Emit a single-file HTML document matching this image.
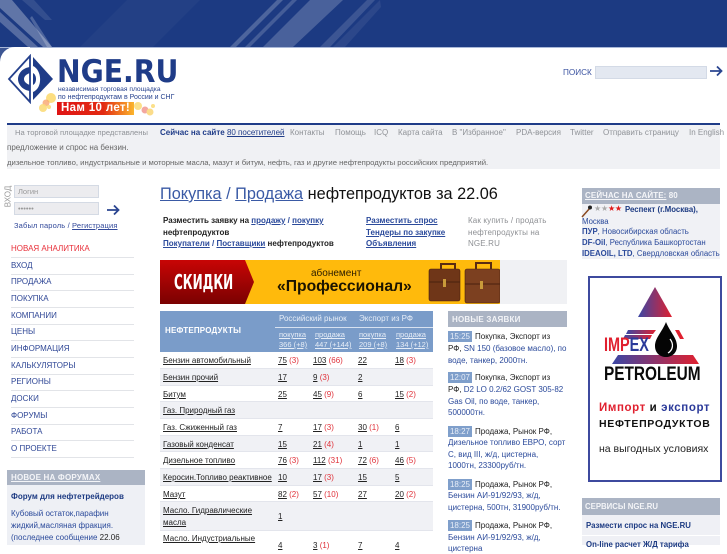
<!DOCTYPE html>
<html lang="ru"><head><meta charset="utf-8"><title>NGE.RU</title>
<style>
html,body{margin:0;padding:0;background:#fff}
body{width:727px;height:545px;overflow:hidden;position:relative;font-family:"Liberation Sans","DejaVu Sans",sans-serif;font-size:8px;color:#222}
.t{position:absolute;white-space:nowrap;line-height:11px;letter-spacing:0}
.b{position:absolute}
a{color:inherit}
.m{position:absolute;left:11px;width:123px;height:16px;border-bottom:1px solid #e2e4e8;color:#2f4796;font-size:8px;line-height:16px}
.n{color:#8f9297;top:127px}
.bk{color:#222}
.r{color:#e0323a}
.bl{color:#2b4a9b}
.db{color:#1c3a82;font-weight:bold}
.row{position:absolute;left:160px;width:273px;border-bottom:1px solid #e3e5ec}
.alt{background:#f0f1f5}
.tm{display:inline-block;width:24px;text-align:center;background:#7f9fcb;color:#e8eef8;margin-right:3px;line-height:11px}
.h{color:#e6edf7;font-size:7.500px}
</style></head><body>

<svg class="b" style="left:0;top:0" width="727" height="48" viewBox="0 0 727 48">
<rect width="727" height="48" fill="#1c3a82"/>
<polygon points="80,47 127,0 200,0 153,47" fill="#fff" opacity=".03"/>
<polygon points="230,47 277,0 283,0 236,47" fill="#fff" opacity=".22"/>
<polygon points="245,47 292,0 297,0 250,47" fill="#fff" opacity=".18"/>
<polygon points="263,47 310,0 343,0 293,47" fill="#fff" opacity=".2"/>
<polygon points="320,47 367,0 375,0 330,47" fill="#fff" opacity=".14"/>
<polygon points="333,47 380,0 381,7 345,47" fill="#fff" opacity=".07"/>
<polygon points="0,0 12,0 52,47 43,47 0,8" fill="#fff" opacity=".3"/>
<polygon points="0,12 38,47 28,47 0,22" fill="#fff" opacity=".25"/>
<polygon points="22,0 34,0 52,20 45,20" fill="#fff" opacity=".1"/>
<polygon points="32,16 52,47 47,47 30,18" fill="#fff" opacity=".22"/>
</svg>
<div class="b" style="left:0;top:47px;width:727px;height:1px;background:#a9b8d8"></div>
<div class="b" style="left:0;top:48px;width:14px;height:14px;background:#3d5693"></div>
<div class="b" style="left:0;top:47px;width:30px;height:30px;background:#fff;border-radius:15px 0 0 0"></div>

<!-- logo -->
<svg class="b" style="left:7px;top:54px" width="48" height="50" viewBox="0 0 48 50">
<path d="M23,2 L2,25 L23,48 Z" fill="#fff" stroke="#24408c" stroke-width="1.800"/>
<path d="M23,13 C15,14 11,20 11,25 C11,30 15,36 23,37 L23,31 C20,30 17,28 17,25 C17,22 20,20 23,19 Z" fill="#1f3c88"/>
<polygon points="26,3 46,25 26,46" fill="#1f3c88"/>
<path d="M26,12 C35,16 36,34 26,38 L26,31 C30,29 30,21 26,19 Z" fill="#fff"/>
</svg>
<div class="t" style="left:57px;top:56px;font-size:31px;line-height:32px;font-weight:bold;color:#1f3c88;font-family:'DejaVu Sans',sans-serif;transform-origin:0 0;transform:scaleX(.91)">NGE.RU</div>
<div class="t" style="left:58px;top:85px;font-size:6.700px;line-height:9px;color:#28438f">независимая торговая площадка</div>
<div class="t" style="left:58px;top:93px;font-size:7px;line-height:9px;color:#28438f">по нефтепродуктам в России и СНГ</div>
<svg class="b" style="left:38px;top:86px" width="120" height="32" viewBox="0 0 120 32">
<circle cx="13" cy="12" r="5" fill="#fbd86b" opacity=".85"/><circle cx="8" cy="17" r="3.500" fill="#f9a56e" opacity=".8"/><circle cx="5" cy="22" r="4" fill="#fbdc7a" opacity=".9"/><circle cx="11" cy="21" r="2" fill="#fbe08a"/>
<circle cx="100" cy="20" r="4" fill="#fbe08a"/><circle cx="107" cy="24" r="3.500" fill="#f3a7a0"/><circle cx="112" cy="26" r="3.500" fill="#fbdc8a"/><circle cx="115" cy="20" r="2" fill="#fbe08a"/>
</svg>
<div class="b" style="left:57px;top:102px;width:77px;height:13px;background:linear-gradient(90deg,#df1414 0,#e22a12 60%,#fbb52c 100%)"></div>
<div class="t" style="left:61px;top:102px;font-size:11.500px;line-height:13px;font-weight:bold;color:#fff;letter-spacing:.35px">Нам 10 лет!</div>

<!-- search -->
<div class="t" style="left:563px;top:67px;color:#3a52a0;font-size:8.200px">ПОИСК</div>
<div class="b" style="left:595px;top:66px;width:110px;height:11px;background:#e3e8f1;border:1px solid #d3dae6"></div>
<svg class="b" style="left:709px;top:65px" width="14" height="12" viewBox="0 0 14 12"><path d="M1 6H12M8 1.500L12.500 6L8 10.500" fill="none" stroke="#2a4590" stroke-width="1.800"/></svg>

<!-- nav -->
<div class="b" style="left:7px;top:123px;width:713px;height:2px;background:#1f3c88"></div>
<div class="b" style="left:7px;top:125px;width:713px;height:44px;background:#f0f1f4"></div>
<div class="t n" style="left:15px;font-size:7.600px">На торговой площадке представлены</div>
<div class="t" style="left:160px;top:127px;color:#1f3c88"><b>Сейчас на сайте</b> <u>80 посетителей</u></div>
<div class="t n" style="left:290px">Контакты</div>
<div class="t n" style="left:335px">Помощь</div>
<div class="t n" style="left:374px">ICQ</div>
<div class="t n" style="left:398px">Карта сайта</div>
<div class="t n" style="left:452px">В "Избранное"</div>
<div class="t n" style="left:516px">PDA-версия</div>
<div class="t n" style="left:570px">Twitter</div>
<div class="t n" style="left:603px">Отправить страницу</div>
<div class="t n" style="left:689px">In English</div>
<div class="t" style="left:7px;top:142px;color:#666">предложение и спрос на бензин.</div>
<div class="t" style="left:7px;top:157px;color:#666;font-size:7.730px">дизельное топливо, индустриальные и моторные масла, мазут и битум, нефть, газ и другие нефтепродукты российских предприятий.</div>

<!-- login -->
<div class="t" style="left:-3px;top:191px;color:#999;font-size:8px;transform:rotate(-90deg)">ВХОД</div>
<div class="b" style="left:14px;top:185px;width:83px;height:11px;background:#ececef;border:1px solid #d4dae4"></div>
<div class="t" style="left:18px;top:186px;color:#999;font-size:7.500px">Логин</div>
<div class="b" style="left:14px;top:202px;width:83px;height:11px;background:#ececef;border:1px solid #d4dae4"></div>
<div class="t" style="left:18px;top:203px;color:#999;font-size:7.500px">••••••</div>
<svg class="b" style="left:106px;top:204px" width="14" height="12" viewBox="0 0 14 12"><path d="M1 6H12M8 1.500L12.500 6L8 10.500" fill="none" stroke="#2a4590" stroke-width="1.800"/></svg>
<div class="t" style="left:14px;top:220px;color:#32499a;font-size:7.500px;letter-spacing:.15px">Забыл пароль / <u>Регистрация</u></div>

<!-- menu -->
<div class="m" style="top:241px;color:#e8303a">НОВАЯ АНАЛИТИКА</div>
<div class="m" style="top:258px">ВХОД</div>
<div class="m" style="top:274px">ПРОДАЖА</div>
<div class="m" style="top:291px">ПОКУПКА</div>
<div class="m" style="top:308px">КОМПАНИИ</div>
<div class="m" style="top:324px">ЦЕНЫ</div>
<div class="m" style="top:341px">ИНФОРМАЦИЯ</div>
<div class="m" style="top:358px">КАЛЬКУЛЯТОРЫ</div>
<div class="m" style="top:374px">РЕГИОНЫ</div>
<div class="m" style="top:391px">ДОСКИ</div>
<div class="m" style="top:408px">ФОРУМЫ</div>
<div class="m" style="top:424px">РАБОТА</div>
<div class="m" style="top:441px">О ПРОЕКТЕ</div>

<!-- forum -->
<div class="b" style="left:7px;top:470px;width:138px;height:15px;background:#abb4c4"></div>
<div class="b" style="left:7px;top:485px;width:138px;height:60px;background:#eef0f5"></div>
<div class="t" style="left:11px;top:472px;color:#f4f5f8;font-weight:bold;letter-spacing:.2px"><u>НОВОЕ НА ФОРУМАХ</u></div>
<div class="t db" style="left:11px;top:491px">Форум для нефтетрейдеров</div>
<div class="t bl" style="left:11px;top:508px">Кубовый остаток,парафин</div>
<div class="t bl" style="left:11px;top:520px">жидкий,масляная фракция.</div>
<div class="t bl" style="left:11px;top:532px">(последнее сообщение <span class="bk">22.06</span></div>

<!-- title -->
<div class="t" style="left:160px;top:184px;font-size:16.300px;line-height:21px;color:#111"><u style="color:#3a5aa5">Покупка</u> <span style="color:#3a5aa5">/</span> <u style="color:#3a5aa5">Продажа</u> нефтепродуктов за 22.06</div>

<div class="t" style="left:163px;top:215px;font-weight:bold;color:#222">Разместить заявку на <u class="bl">продажу</u> <span class="bl">/</span> <u class="bl">покупку</u></div>
<div class="t" style="left:163px;top:227px;font-weight:bold;color:#222">нефтепродуктов</div>
<div class="t" style="left:163px;top:238px;font-weight:bold;color:#222"><u class="bl">Покупатели</u> <span class="bl">/</span> <u class="bl">Поставщики</u> нефтепродуктов</div>
<div class="t bl" style="left:366px;top:215px;font-weight:bold"><u>Разместить спрос</u></div>
<div class="t bl" style="left:366px;top:227px;font-weight:bold"><u>Тендеры по закупке</u></div>
<div class="t bl" style="left:366px;top:238px;font-weight:bold"><u>Объявления</u></div>
<div class="t" style="left:468px;top:215px;color:#8e9094;letter-spacing:.15px">Как купить / продать</div>
<div class="t" style="left:468px;top:227px;color:#8e9094;letter-spacing:.15px">нефтепродукты на</div>
<div class="t" style="left:468px;top:238px;color:#8e9094;letter-spacing:.15px">NGE.RU</div>

<!-- banner -->
<div class="b" style="left:160px;top:260px;width:407px;height:44px;background:#f0f1f4"></div>
<div class="b" style="left:160px;top:260px;width:340px;height:44px;background:#ffba0c"></div>
<svg class="b" style="left:160px;top:260px" width="340" height="44" viewBox="0 0 340 44">
<defs><linearGradient id="rg" x1="0" y1="0" x2="0" y2="1"><stop offset="0" stop-color="#c80505"/><stop offset="1" stop-color="#7a0202"/></linearGradient></defs>
<polygon points="0,0 85,0 94,22 85,44 0,44" fill="url(#rg)"/>
<g fill="#6f3618" stroke="#4a210e" stroke-width=".6">
<rect x="269" y="9" width="31" height="32" rx="2"/><rect x="305" y="9" width="35" height="34" rx="2" fill="#7c4020"/>
</g>
<path d="M281 9V4H295V9M316 9V3H331V9" fill="none" stroke="#5a2c12" stroke-width="2"/>
<path d="M269 22H300M305 24H340" stroke="#4a210e" stroke-width="1" fill="none"/>
<rect x="283" y="19" width="3" height="8" fill="#c99a3a"/><rect x="320" y="21" width="3" height="8" fill="#c99a3a"/>
</svg>
<div class="t" style="left:174px;top:272px;font-size:20px;line-height:21px;font-weight:bold;color:#fff;font-family:'DejaVu Sans',sans-serif;transform-origin:0 0;transform:scaleX(.6)">СКИДКИ</div>
<div class="t" style="left:311px;top:267px;font-size:10px;line-height:14px;color:#2a1c00">абонемент</div>
<div class="t" style="left:277px;top:278px;font-size:15.700px;line-height:18px;font-weight:bold;color:#1c1400">«Профессионал»</div>

<!-- table -->
<div class="b" style="left:160px;top:311px;width:273px;height:41px;background:#7a9cc9"></div>
<div class="b" style="left:275px;top:327px;width:158px;height:1px;background:#d7e1f0"></div>
<div class="t" style="left:165px;top:325px;font-weight:bold;color:#fff;letter-spacing:.2px">НЕФТЕПРОДУКТЫ</div>
<div class="t" style="left:279px;top:313px;color:#e6edf7">Российский рынок</div>
<div class="t" style="left:359px;top:313px;color:#e6edf7">Экспорт из РФ</div>
<div class="t h" style="left:279px;top:329px"><u>покупка</u></div>
<div class="t h" style="left:315px;top:329px"><u>продажа</u></div>
<div class="t h" style="left:359px;top:329px"><u>покупка</u></div>
<div class="t h" style="left:396px;top:329px"><u>продажа</u></div>
<div class="t h" style="left:279px;top:339px"><u>366 (+8)</u></div>
<div class="t h" style="left:315px;top:339px"><u>447 (+144)</u></div>
<div class="t h" style="left:359px;top:339px"><u>209 (+8)</u></div>
<div class="t h" style="left:396px;top:339px"><u>134 (+12)</u></div>

<div class="row" style="top:352px;height:16px"></div>
<div class="row alt" style="top:369px;height:16px"></div>
<div class="row" style="top:386px;height:15px"></div>
<div class="row alt" style="top:402px;height:16px"></div>
<div class="row" style="top:419px;height:16px"></div>
<div class="row alt" style="top:436px;height:15px"></div>
<div class="row" style="top:452px;height:16px"></div>
<div class="row alt" style="top:469px;height:16px"></div>
<div class="row" style="top:486px;height:15px"></div>
<div class="row alt" style="top:502px;height:28px"></div>

<div class="t" style="left:163px;top:355px"><u>Бензин автомобильный</u></div>
<div class="t" style="left:278px;top:355px"><u>75</u> <span class="r">(3)</span></div>
<div class="t" style="left:313px;top:355px"><u>103</u> <span class="r">(66)</span></div>
<div class="t" style="left:358px;top:355px"><u>22</u></div>
<div class="t" style="left:395px;top:355px"><u>18</u> <span class="r">(3)</span></div>

<div class="t" style="left:163px;top:372px"><u>Бензин прочий</u></div>
<div class="t" style="left:278px;top:372px"><u>17</u></div>
<div class="t" style="left:313px;top:372px"><u>9</u> <span class="r">(3)</span></div>
<div class="t" style="left:358px;top:372px"><u>2</u></div>

<div class="t" style="left:163px;top:389px"><u>Битум</u></div>
<div class="t" style="left:278px;top:389px"><u>25</u></div>
<div class="t" style="left:313px;top:389px"><u>45</u> <span class="r">(9)</span></div>
<div class="t" style="left:358px;top:389px"><u>6</u></div>
<div class="t" style="left:395px;top:389px"><u>15</u> <span class="r">(2)</span></div>

<div class="t" style="left:163px;top:405px"><u>Газ. Природный газ</u></div>

<div class="t" style="left:163px;top:422px"><u>Газ. Сжиженный газ</u></div>
<div class="t" style="left:278px;top:422px"><u>7</u></div>
<div class="t" style="left:313px;top:422px"><u>17</u> <span class="r">(3)</span></div>
<div class="t" style="left:358px;top:422px"><u>30</u> <span class="r">(1)</span></div>
<div class="t" style="left:395px;top:422px"><u>6</u></div>

<div class="t" style="left:163px;top:439px"><u>Газовый конденсат</u></div>
<div class="t" style="left:278px;top:439px"><u>15</u></div>
<div class="t" style="left:313px;top:439px"><u>21</u> <span class="r">(4)</span></div>
<div class="t" style="left:358px;top:439px"><u>1</u></div>
<div class="t" style="left:395px;top:439px"><u>1</u></div>

<div class="t" style="left:163px;top:455px"><u>Дизельное топливо</u></div>
<div class="t" style="left:278px;top:455px"><u>76</u> <span class="r">(3)</span></div>
<div class="t" style="left:313px;top:455px"><u>112</u> <span class="r">(31)</span></div>
<div class="t" style="left:358px;top:455px"><u>72</u> <span class="r">(6)</span></div>
<div class="t" style="left:395px;top:455px"><u>46</u> <span class="r">(5)</span></div>

<div class="t" style="left:163px;top:472px"><u>Керосин.Топливо реактивное</u></div>
<div class="t" style="left:278px;top:472px"><u>10</u></div>
<div class="t" style="left:313px;top:472px"><u>17</u> <span class="r">(3)</span></div>
<div class="t" style="left:358px;top:472px"><u>15</u></div>
<div class="t" style="left:395px;top:472px"><u>5</u></div>

<div class="t" style="left:163px;top:489px"><u>Мазут</u></div>
<div class="t" style="left:278px;top:489px"><u>82</u> <span class="r">(2)</span></div>
<div class="t" style="left:313px;top:489px"><u>57</u> <span class="r">(10)</span></div>
<div class="t" style="left:358px;top:489px"><u>27</u></div>
<div class="t" style="left:395px;top:489px"><u>20</u> <span class="r">(2)</span></div>

<div class="t" style="left:163px;top:505px"><u>Масло. Гидравлические</u></div>
<div class="t" style="left:163px;top:517px"><u>масла</u></div>
<div class="t" style="left:278px;top:511px"><u>1</u></div>
<div class="t" style="left:163px;top:533px"><u>Масло. Индустриальные</u></div>
<div class="t" style="left:278px;top:540px"><u>4</u></div>
<div class="t" style="left:313px;top:540px"><u>3</u> <span class="r">(1)</span></div>
<div class="t" style="left:358px;top:540px"><u>7</u></div>
<div class="t" style="left:395px;top:540px"><u>4</u></div>

<!-- new orders -->
<div class="b" style="left:448px;top:311px;width:119px;height:16px;background:#abb4c4"></div>
<div class="t" style="left:452px;top:314px;font-weight:bold;color:#f3f4f7;letter-spacing:.2px">НОВЫЕ ЗАЯВКИ</div>

<div class="t" style="left:448px;top:331px"><span class="tm">15:25</span>Покупка, Экспорт из</div>
<div class="t" style="left:448px;top:343px">РФ, <span class="bl">SN 150 (базовое масло), по</span></div>
<div class="t bl" style="left:448px;top:355px">воде, танкер, 2000тн.</div>

<div class="t" style="left:448px;top:372px"><span class="tm">12:07</span>Покупка, Экспорт из</div>
<div class="t" style="left:448px;top:384px">РФ, <span class="bl">D2 LO 0.2/62 GOST 305-82</span></div>
<div class="t bl" style="left:448px;top:396px">Gas Oil, по воде, танкер,</div>
<div class="t bl" style="left:448px;top:407px">500000тн.</div>

<div class="t" style="left:448px;top:426px"><span class="tm">18:27</span>Продажа, Рынок РФ,</div>
<div class="t bl" style="left:448px;top:437px">Дизельное топливо ЕВРО, сорт</div>
<div class="t bl" style="left:448px;top:449px">С, вид III, ж/д, цистерна,</div>
<div class="t bl" style="left:448px;top:460px">1000тн, 23300руб/тн.</div>

<div class="t" style="left:448px;top:479px"><span class="tm">18:25</span>Продажа, Рынок РФ,</div>
<div class="t bl" style="left:448px;top:490px">Бензин АИ-91/92/93, ж/д,</div>
<div class="t bl" style="left:448px;top:502px">цистерна, 500тн, 31900руб/тн.</div>

<div class="t" style="left:448px;top:520px"><span class="tm">18:25</span>Продажа, Рынок РФ,</div>
<div class="t bl" style="left:448px;top:532px">Бензин АИ-91/92/93, ж/д,</div>
<div class="t bl" style="left:448px;top:543px">цистерна</div>

<!-- right -->
<div class="b" style="left:582px;top:188px;width:138px;height:16px;background:#abb4c4"></div>
<div class="b" style="left:582px;top:204px;width:138px;height:55px;background:#f0f1f5"></div>
<div class="t" style="left:585px;top:190px;font-weight:bold;color:#f4f5f8;letter-spacing:.1px"><u>СЕЙЧАС НА САЙТЕ:</u> 80</div>
<svg class="b" style="left:581px;top:203px" width="42" height="15" viewBox="0 0 42 15">
<path d="M1 14L9 5" stroke="#8a4a20" stroke-width="1.500"/><circle cx="9" cy="4.500" r="2" fill="#222"/>
</svg>
<div class="t" style="left:594px;top:203px;line-height:11px;letter-spacing:-.2px"><span style="color:#aaa">★★</span><span style="color:#e01818">★★</span></div>
<div class="t db" style="left:625px;top:204px;font-size:7.800px">Респект (г.Москва),</div>
<div class="t" style="left:582px;top:216px;color:#2b4a9b;font-size:7.800px">Москва</div>
<div class="t" style="left:582px;top:226px;color:#2b4a9b;font-size:7.800px"><b>ПУР</b>, Новосибирская область</div>
<div class="t" style="left:582px;top:237px;color:#2b4a9b;font-size:7.800px"><b>DF-Oil</b>, Республика Башкортостан</div>
<div class="t" style="left:582px;top:248px;color:#2b4a9b;font-size:7.800px"><b>IDEAOIL, LTD</b>, Свердловская область</div>

<!-- ad -->
<div class="b" style="left:588px;top:276px;width:130px;height:202px;border:2px solid #3e4a9e;background:#fff"></div>
<svg class="b" style="left:590px;top:278px" width="130" height="200" viewBox="0 0 130 200">
<defs><linearGradient id="pg" x1="0" x2="1"><stop offset="0" stop-color="#3a47a5"/><stop offset="1" stop-color="#e0202f"/></linearGradient></defs>
<polygon points="65,9 48,39 82,39" fill="url(#pg)"/>
<polygon points="38,52 66,52 63,56 36,56" fill="url(#pg)"/>
<polygon points="35,57 62,57 60,61 33,61" fill="url(#pg)"/>
<polygon points="28,77 103,77 109,86 22,86" fill="url(#pg)"/>
<polygon points="85,52 89,52 94,61 90,61" fill="#e0202f"/>
<path d="M76,44C72,54 65,60 65,68C65,75 70,79 76,79C82,79 87,75 87,68C87,60 80,54 76,44Z" fill="#050505"/>
<path d="M80,61C84,66 83,72 78,75" fill="none" stroke="#fff" stroke-width="1.300"/>
</svg>
<div class="t" style="left:604px;top:335px;font-size:19px;line-height:21px;font-weight:bold;color:#e0202f;transform-origin:0 0;transform:scaleX(.76)">IMP<span style="color:#2b3a9a">EX</span></div>
<div class="t" style="left:604px;top:364px;font-size:19px;line-height:22px;font-weight:bold;color:#0a0a0a;transform-origin:0 0;transform:scaleX(.81)">PETROLEUM</div>
<div class="t" style="left:599px;top:401px;font-size:11.500px;line-height:14px;font-weight:bold;letter-spacing:.6px;color:#111"><span style="color:#e0202f">Импорт</span> и <span style="color:#2b3a9a">экспорт</span></div>
<div class="t" style="left:599px;top:417px;font-size:10.500px;line-height:14px;font-weight:bold;letter-spacing:.7px;color:#111">НЕФТЕПРОДУКТОВ</div>
<div class="t" style="left:599px;top:443px;font-size:10.500px;line-height:12px;color:#222">на выгодных условиях</div>

<!-- services -->
<div class="b" style="left:582px;top:498px;width:138px;height:17px;background:#abb4c4"></div>
<div class="b" style="left:582px;top:515px;width:138px;height:20px;background:#eff0f5"></div>
<div class="b" style="left:582px;top:536px;width:138px;height:9px;background:#eff0f5"></div>
<div class="t" style="left:585px;top:501px;color:#f3f4f7;font-weight:bold;font-size:7.800px">СЕРВИСЫ NGE.RU</div>
<div class="t db" style="left:586px;top:520px;font-size:7.800px">Размести спрос на NGE.RU</div>
<div class="t db" style="left:586px;top:539px;font-size:7.800px">On-line расчет Ж/Д тарифа</div>

</body></html>
